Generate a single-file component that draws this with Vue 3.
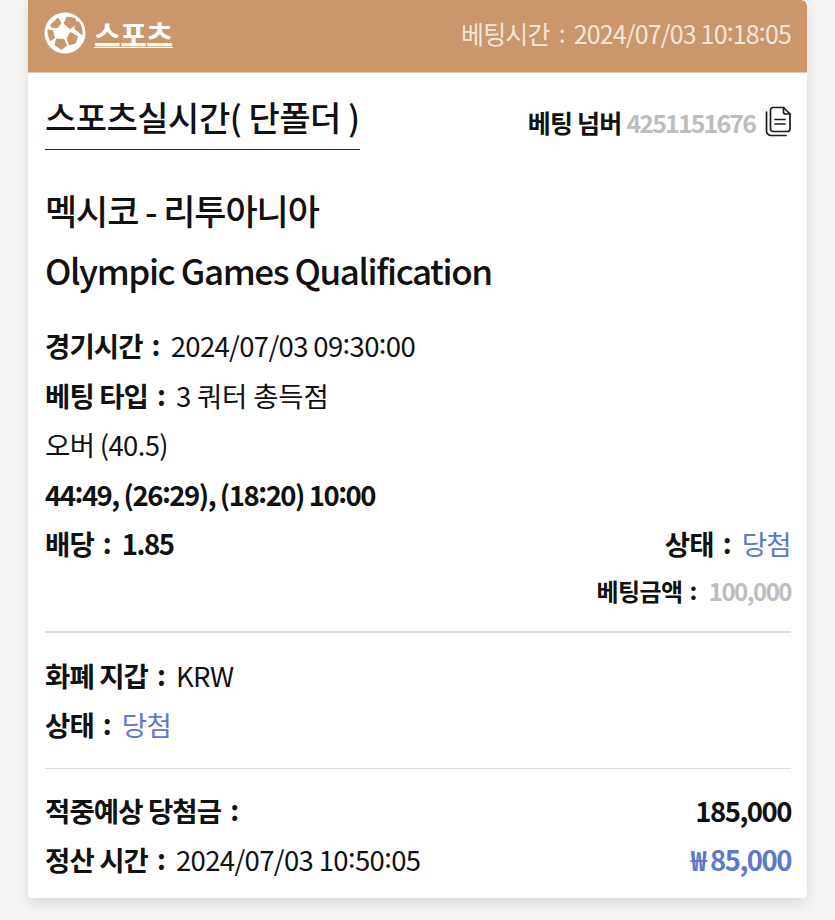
<template>
  <div class="page">
    <div class="card">
      <!-- Header -->
      <div class="card-head">
        <div class="head-left">
          <svg class="ball" width="42" height="42" viewBox="0 0 42 42" fill="#cb9669" stroke="#cb9669" stroke-width="1" stroke-linejoin="round">
            <circle cx="21" cy="21" r="20.500" fill="#fff" stroke="none"/>
            <path d="M20 11.500L23 5 31 6.500 33 12 26 16.500z"/>
            <path d="M6.500 13L14 6 17 11 13.500 15.500 8 15.500z"/>
            <path d="M4 18L8.500 18.500 10.500 26 6.500 28.500C4.500 25 3.800 21.500 4 18z"/>
            <path d="M12.500 27L20 27.500 22.500 33.500 17.500 37.500 11 33z"/>
            <path d="M26.500 20.500L33.500 24.500 31.500 31 25.500 33 23 26.500z"/>
            <path d="M34 9.500C36.500 12 38 15.500 38.200 22.500L36 21 30.500 16.500z"/>
          </svg>
          <span class="head-title">스포츠</span>
        </div>
        <div class="head-time">베팅시간<i class="c">:</i>2024/07/03 10<i>:</i>18<i>:</i>05</div>
      </div>

      <div class="card-body">
        <!-- Title row -->
        <div class="title-row">
          <div class="bet-title">스포츠실시간( 단폴더 )</div>
          <div class="bet-number">
            <b>베팅 넘버</b>
            <b class="grey num">4251151676</b>
            <svg width="27" height="31" viewBox="0 0 27 31" fill="none" stroke="#1a1a1a" stroke-width="1.700" stroke-linejoin="round" stroke-linecap="round">
              <path d="M8 1.500h10.500l6.500 6.500v15a2.500 2.500 0 0 1-2.500 2.500h-14.500a2.500 2.500 0 0 1-2.500-2.500v-19a2.500 2.500 0 0 1 2.500-2.500z"/>
              <path d="M18.500 1.500v4.500a2 2 0 0 0 2 2h4.500"/>
              <path d="M1.500 6v19a4.500 4.500 0 0 0 4.500 4.500h15"/>
              <path d="M10 13.500h10M10 18h10"/>
            </svg>
          </div>
        </div>

        <!-- Match -->
        <div class="match">
          <div class="match-line kr">멕시코 - 리투아니아</div>
          <div class="match-line">Olympic Games Qualification</div>
        </div>

        <!-- Details -->
        <div class="details">
          <div class="row"><b>경기시간<i class="c">:</i></b>2024/07/03 09<i>:</i>30<i>:</i>00</div>
          <div class="row"><b>베팅 타입<i class="c">:</i></b><span class="wide">3 쿼터 총득점</span></div>
          <div class="row">오버 (40.5)</div>
          <div class="row"><b class="tight">44<i>:</i>49, (26<i>:</i>29), (18<i>:</i>20) 10<i>:</i>00</b></div>
          <div class="row split">
            <span><b>배당<i class="c">:</i></b><b class="tight">1.85</b></span>
            <span><b>상태<i class="c">:</i></b><span class="blue">당첨</span></span>
          </div>
          <div class="amount"><b>베팅금액<i class="c">:</i></b><b class="grey tight">100,000</b></div>
        </div>

        <div class="sec-currency">
          <div class="row"><b>화폐 지갑<i class="c">:</i></b>KRW</div>
          <div class="row"><b>상태<i class="c">:</i></b><span class="blue">당첨</span></div>
        </div>

        <div class="sec-total">
          <div class="row split">
            <b>적중예상 당첨금<i class="c">:</i></b>
            <b class="tight">185,000</b>
          </div>
          <div class="row split">
            <span><b>정산 시간<i class="c">:</i></b>2024/07/03 10<i>:</i>50<i>:</i>05</span>
            <b class="blue tight">₩ 85,000</b>
          </div>
        </div>
      </div>
    </div>
  </div>
</template>

<script setup>
</script>

<style>
html, body {
  margin: 0;
  background: #f5f5f4;
}
</style>

<style scoped>
.page {
  height: 920px;
  padding: 0 28px;
  box-sizing: border-box;
  font-family: "Noto Sans CJK KR", "Noto Sans", sans-serif;
  color: #111;
  overflow: hidden;
}
.card {
  background: #fff;
  height: 898px;
  border-radius: 0 0 4px 4px;
  box-shadow: 0 6px 14px rgba(0, 0, 0, 0.1);
}
b {
  font-weight: 600;
}
/* raised colon inside times */
i {
  font-style: normal;
  line-height: 0;
  vertical-align: 3px;
}
/* spaced colon after a label */
i.c {
  font-weight: 700;
  vertical-align: 1px;
  margin: 0 11px 0 9px;
}
.card-head {
  height: 73px;
  background: #cb9669;
  border-radius: 0 6px 0 0;
  border-bottom: 1px solid #e2c9b2;
  display: flex;
  align-items: center;
  justify-content: space-between;
  padding: 0 16px 7px;
  box-sizing: border-box;
}
.head-left {
  display: flex;
  align-items: center;
  gap: 8px;
}
.head-title {
  color: #fff;
  font-size: 29px;
  font-weight: 700;
  letter-spacing: -0.500px;
  line-height: 32px;
  height: 29px;
  border-bottom: 1px solid #fff;
}
.head-time {
  color: #f3e6da;
  font-size: 25px;
  letter-spacing: -0.850px;
  line-height: 32px;
}
.head-time i.c {
  font-weight: 400;
  margin: 0 9px;
}
.card-body {
  padding: 0 16px 0 17px;
}
.title-row {
  display: flex;
  justify-content: space-between;
  align-items: center;
  padding-top: 20px;
}
.bet-title {
  font-size: 34px;
  font-weight: 500;
  letter-spacing: -0.500px;
  line-height: 48px;
  padding-bottom: 8px;
  border-bottom: 1px solid #222;
}
.bet-number {
  display: flex;
  align-items: center;
  gap: 5px;
  font-size: 25px;
  letter-spacing: -0.800px;
}
.bet-number .num {
  letter-spacing: -1.900px;
}
.bet-number svg {
  margin-left: 5px;
  margin-right: -1px;
}
.grey {
  color: #bdbdbd;
}
.blue {
  color: #5a78cc;
}
.wide {
  letter-spacing: -0.200px;
}
.match {
  padding-top: 30px;
}
.match-line {
  font-size: 35px;
  font-weight: 500;
  letter-spacing: -1.400px;
  line-height: 60px;
}
.match-line.kr {
  letter-spacing: -1.100px;
}
.details {
  padding-top: 21px;
  padding-bottom: 18px;
  border-bottom: 2px solid #ddd;
}
.row {
  font-size: 27.500px;
  letter-spacing: -0.650px;
  line-height: 49.500px;
}
.row b {
  letter-spacing: -0.900px;
}
.row b.tight,
.amount b.tight {
  letter-spacing: -1.500px;
}
.split {
  display: flex;
  justify-content: space-between;
}
.amount {
  text-align: right;
  font-size: 24px;
  letter-spacing: -0.600px;
  line-height: 44px;
}
.amount i.c {
  margin: 0 12px 0 7px;
}
.sec-currency {
  padding: 18px 0 18px;
  border-bottom: 1px solid #ddd;
}
.sec-total {
  padding-top: 17px;
}
</style>
